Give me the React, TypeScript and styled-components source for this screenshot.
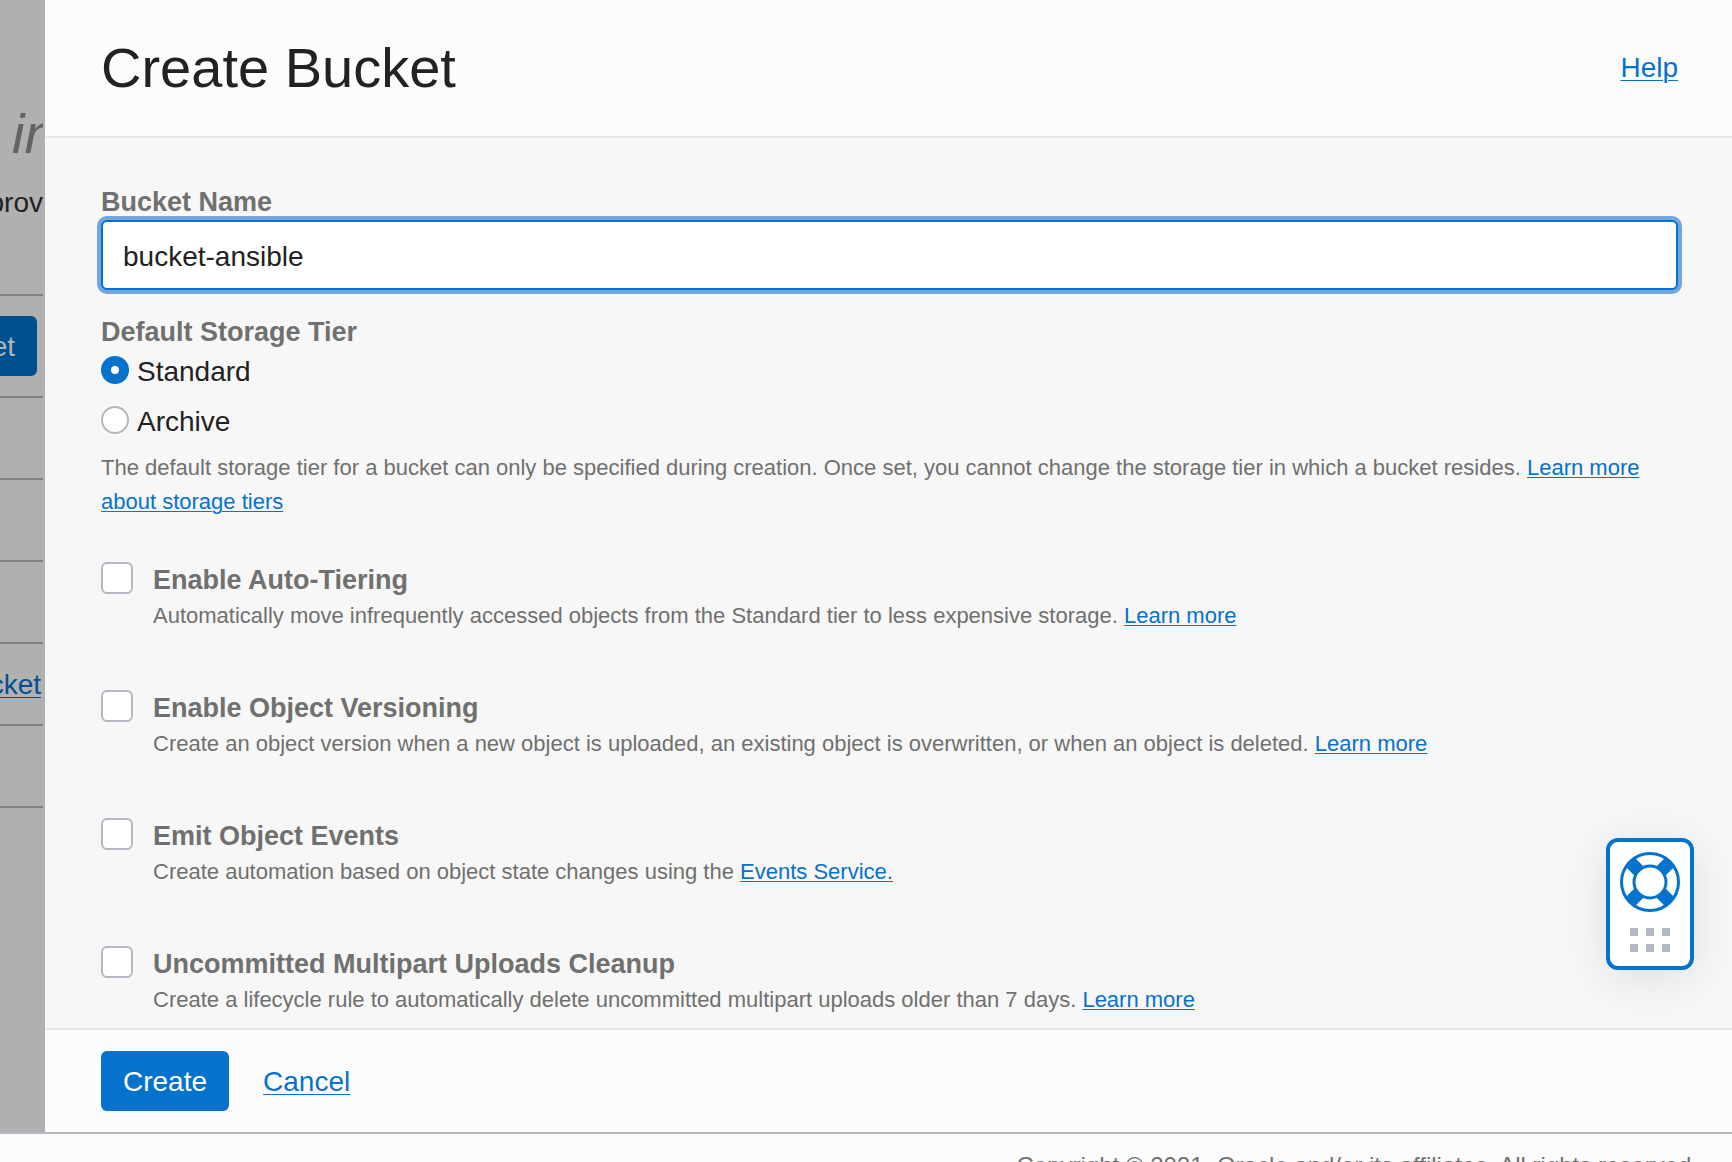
import React, { useState } from "react";
import styled, { createGlobalStyle } from "styled-components";

const color = {
  accent: "#0572ce",
  ring: "#73a5e0",
  text: "#222222",
  muted: "#70706e",
  rule: "#e6e6e6",
  outline: "#b3b8c3",
  surface: "#fcfcfc",
  body: "#f7f7f7",
};

const GlobalStyle = createGlobalStyle`
  * { box-sizing: border-box; }
  body {
    margin: 0;
    font-family: "Liberation Sans", Arial, sans-serif;
    font-size: 28px;
    line-height: 34px;
    color: ${color.text};
    background: ${color.surface};
  }
`;

const Shell = styled.div`
  display: flex;
  flex-direction: column;
  height: 100vh;
  overflow: hidden;
`;

const Workspace = styled.div`
  display: flex;
  flex: 1;
  min-height: 0;
`;

const Backdrop = styled.div`
  flex: 0 0 45px;
  padding-right: 2px;
  background: #b0b0b0;
  overflow: hidden;
`;

const BackdropTitle = styled.div`
  padding: 102px 0 0 12px;
  font-size: 56px;
  line-height: 64px;
  font-style: italic;
  color: #636363;
  overflow: hidden;
`;

const BackdropCell = styled.div`
  display: flex;
  justify-content: flex-end;
  align-items: center;
  height: 82px;
  padding-top: 2px;
  border-bottom: 2px solid #7f8387;
  overflow: hidden;
`;

const BackdropIntro = styled(BackdropCell)`
  align-items: flex-start;
  height: 130px;
  padding-top: 20px;
`;

const BackdropToolbar = styled(BackdropCell)`
  height: 102px;
  padding: 0 6px 0 0;
`;

const BackdropButton = styled.button`
  display: flex;
  justify-content: flex-end;
  align-items: center;
  width: 100%;
  height: 60px;
  padding: 2px 22px 0 0;
  border: 0;
  border-radius: 0 6px 6px 0;
  background: #004f8f;
  color: #b4b4b4;
  font: inherit;
  overflow: hidden;
`;

const Link = styled.a`
  color: ${color.accent};
  text-decoration: underline 1px;
  text-underline-offset: 3px;
`;

const BackdropLink = styled(Link)`
  padding-right: 2px;
  color: #044f8f;
`;

const Panel = styled.section`
  display: flex;
  flex: 1;
  flex-direction: column;
  min-width: 0;
  background: ${color.surface};
`;

const PanelHeader = styled.header`
  display: flex;
  justify-content: space-between;
  align-items: center;
  padding: 36px 54px 36px 56px;
  border-bottom: 2px solid ${color.rule};
`;

const Title = styled.h1`
  margin: 0;
  font-size: 56px;
  line-height: 64px;
  font-weight: 400;
`;

const Form = styled.form`
  flex: 1;
  min-height: 0;
  padding: 48px 54px 0 56px;
  background: ${color.body};
  overflow: auto;
`;

const strongLabel = `
  font-size: 27px;
  line-height: 32px;
  font-weight: 700;
  color: ${color.muted};
`;

const Field = styled.div`
  display: flex;
  flex-direction: column;
  gap: 2px;
`;

const Label = styled.label`
  ${strongLabel}
`;

const TextInput = styled.input`
  width: 100%;
  height: 70px;
  padding: 3px 20px 0;
  border: 2px solid ${color.accent};
  border-radius: 6px;
  outline: 0;
  box-shadow: 0 0 0 4px ${color.ring};
  background: #ffffff;
  color: ${color.text};
  font: inherit;
`;

const RadioGroup = styled.fieldset`
  display: flex;
  flex-direction: column;
  gap: 16px;
  margin: 26px 0 12px;
  padding: 0;
  border: 0;
`;

const Legend = styled.legend`
  margin-bottom: 7px;
  padding: 0;
  ${strongLabel}
`;

const RadioOption = styled.label`
  display: flex;
  align-items: flex-start;
  gap: 8px;
`;

const Radio = styled.input`
  appearance: none;
  width: 28px;
  height: 28px;
  margin: 1px 0 0;
  border: 2px solid ${color.outline};
  border-radius: 50%;
  background: #ffffff;

  &:checked {
    border: 10px solid ${color.accent};
  }
`;

const Hint = styled.p`
  margin: 0;
  font-size: 22px;
  color: ${color.muted};

  ${Link} {
    text-underline-offset: 2px;
  }
`;

const Options = styled.div`
  display: flex;
  flex-direction: column;
  gap: 57px;
  margin-top: 43px;
`;

const Option = styled.div`
  display: grid;
  grid-template-columns: 32px 1fr;
  column-gap: 20px;
  row-gap: 1px;

  ${Hint} {
    grid-column: 2;
  }
`;

const OptionLabel = styled(Label)`
  line-height: 36px;
`;

const Checkbox = styled.input`
  appearance: none;
  width: 32px;
  height: 32px;
  margin: 0;
  border: 2px solid ${color.outline};
  border-radius: 6px;
  background: #ffffff;

  &:checked {
    background: ${color.accent};
    border-color: ${color.accent};
  }
`;

const PanelFooter = styled.footer`
  display: flex;
  align-items: center;
  gap: 34px;
  padding: 21px 56px;
  border-top: 2px solid ${color.rule};

  > ${Link} {
    padding-top: 2px;
  }
`;

const PrimaryButton = styled.button`
  height: 60px;
  padding: 2px 22px 0;
  border: 0;
  border-radius: 6px;
  background: ${color.accent};
  color: #ffffff;
  font: inherit;
`;

const PageFooter = styled.footer`
  flex: 0 0 30px;
  padding: 15px 34px 0;
  border-top: 2px solid ${color.outline};
  background: #fbfbfb;
  color: ${color.muted};
  font-size: 24px;
  text-align: right;
  white-space: nowrap;
  overflow: hidden;
`;

const HelpWidget = styled.button`
  position: fixed;
  right: 38px;
  bottom: 192px;
  display: flex;
  flex-direction: column;
  align-items: center;
  gap: 16px;
  width: 88px;
  height: 132px;
  padding: 10px 0 0;
  border: 4px solid ${color.accent};
  border-radius: 12px;
  background: #ffffff;
  box-shadow: 0 8px 48px rgba(0, 0, 0, 0.1);
`;

const Grip = styled.span`
  display: grid;
  grid-template-columns: repeat(3, 8px);
  grid-auto-rows: 8px;
  gap: 8px;
`;

const GripDot = styled.span`
  background: #b3bac3;
`;

const Lifebuoy = () => (
  <svg width="60" height="60" viewBox="0 0 60 60" aria-hidden="true">
    <g fill="none" stroke={color.accent}>
      <path
        strokeWidth="13"
        d="M10.5 10.5 19.5 19.5M49.5 10.5 40.5 19.5M10.5 49.5 19.5 40.5M49.5 49.5 40.5 40.5"
      />
      <circle cx="30" cy="30" r="28.5" strokeWidth="3" />
      <circle cx="30" cy="30" r="16" strokeWidth="3" fill="#ffffff" />
    </g>
  </svg>
);

const options = [
  {
    id: "auto-tiering",
    title: "Enable Auto-Tiering",
    hint: "Automatically move infrequently accessed objects from the Standard tier to less expensive storage.",
    link: "Learn more",
  },
  {
    id: "versioning",
    title: "Enable Object Versioning",
    hint: "Create an object version when a new object is uploaded, an existing object is overwritten, or when an object is deleted.",
    link: "Learn more",
  },
  {
    id: "events",
    title: "Emit Object Events",
    hint: "Create automation based on object state changes using the",
    link: "Events Service.",
  },
  {
    id: "cleanup",
    title: "Uncommitted Multipart Uploads Cleanup",
    hint: "Create a lifecycle rule to automatically delete uncommitted multipart uploads older than 7 days.",
    link: "Learn more",
  },
];

const tiers = ["Standard", "Archive"];

export default function App() {
  const [name, setName] = useState("bucket-ansible");
  const [tier, setTier] = useState("Standard");

  return (
    <Shell>
      <GlobalStyle />
      <Workspace>
        <Backdrop>
          <BackdropTitle>in</BackdropTitle>
          <BackdropIntro>prov</BackdropIntro>
          <BackdropToolbar>
            <BackdropButton type="button">et</BackdropButton>
          </BackdropToolbar>
          <BackdropCell />
          <BackdropCell />
          <BackdropCell />
          <BackdropCell>
            <BackdropLink href="#bucket">cket</BackdropLink>
          </BackdropCell>
          <BackdropCell />
        </Backdrop>

        <Panel>
          <PanelHeader>
            <Title>Create Bucket</Title>
            <Link href="#help">Help</Link>
          </PanelHeader>

          <Form id="create-bucket" onSubmit={(e) => e.preventDefault()}>
            <Field>
              <Label htmlFor="bucket-name">Bucket Name</Label>
              <TextInput
                id="bucket-name"
                type="text"
                value={name}
                onChange={(e) => setName(e.target.value)}
              />
            </Field>

            <RadioGroup>
              <Legend>Default Storage Tier</Legend>
              {tiers.map((t) => (
                <RadioOption key={t}>
                  <Radio
                    type="radio"
                    name="tier"
                    value={t}
                    checked={tier === t}
                    onChange={() => setTier(t)}
                  />
                  {t}
                </RadioOption>
              ))}
            </RadioGroup>
            <Hint>
              The default storage tier for a bucket can only be specified during creation. Once set,
              you cannot change the storage tier in which a bucket resides.{" "}
              <Link href="#storage-tiers">Learn more about storage tiers</Link>
            </Hint>

            <Options>
              {options.map((o) => (
                <Option key={o.id}>
                  <Checkbox type="checkbox" id={o.id} />
                  <OptionLabel htmlFor={o.id}>{o.title}</OptionLabel>
                  <Hint>
                    {o.hint} <Link href={"#" + o.id}>{o.link}</Link>
                  </Hint>
                </Option>
              ))}
            </Options>
          </Form>

          <PanelFooter>
            <PrimaryButton type="submit" form="create-bucket">
              Create
            </PrimaryButton>
            <Link href="#cancel">Cancel</Link>
          </PanelFooter>
        </Panel>
      </Workspace>

      <PageFooter>Copyright © 2021, Oracle and/or its affiliates. All rights reserved.</PageFooter>

      <HelpWidget type="button" aria-label="Support">
        <Lifebuoy />
        <Grip>
          {[0, 1, 2, 3, 4, 5].map((n) => (
            <GripDot key={n} />
          ))}
        </Grip>
      </HelpWidget>
    </Shell>
  );
}
